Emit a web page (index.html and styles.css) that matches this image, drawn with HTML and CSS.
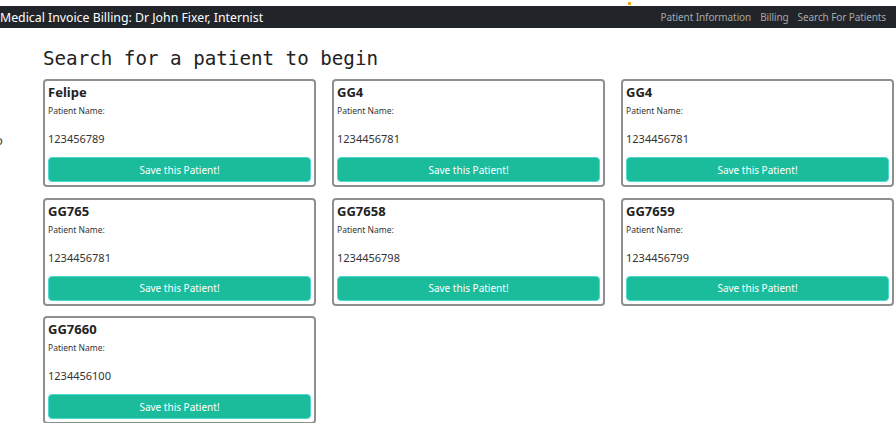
FILE: index.html
```html
<!DOCTYPE html>
<html>
<head>
<meta charset="utf-8">
<link rel="stylesheet" href="styles.css">
</head>
<body>
<div class="topstrip"><span class="dot"></span></div>
<nav class="navbar">
  <span class="brand">Medical Invoice Billing: Dr John Fixer, Internist</span>
  <div class="links">
    <a>Patient Information</a>
    <a>Billing</a>
    <a>Search For Patients</a>
  </div>
</nav>
<div class="main">
  <div class="gutter"><span class="stray">o</span></div>
  <div class="content">
    <h1 class="heading">Search for a patient to begin</h1>
    <div class="grid">
      <div class="card"><div class="title">Felipe</div><div class="label">Patient Name:</div><div class="num">123456789</div><div class="btn">Save this Patient!</div></div>
      <div class="card"><div class="title">GG4</div><div class="label">Patient Name:</div><div class="num">1234456781</div><div class="btn">Save this Patient!</div></div>
      <div class="card"><div class="title">GG4</div><div class="label">Patient Name:</div><div class="num">1234456781</div><div class="btn">Save this Patient!</div></div>
      <div class="card"><div class="title">GG765</div><div class="label">Patient Name:</div><div class="num">1234456781</div><div class="btn">Save this Patient!</div></div>
      <div class="card"><div class="title">GG7658</div><div class="label">Patient Name:</div><div class="num">1234456798</div><div class="btn">Save this Patient!</div></div>
      <div class="card"><div class="title">GG7659</div><div class="label">Patient Name:</div><div class="num">1234456799</div><div class="btn">Save this Patient!</div></div>
      <div class="card"><div class="title">GG7660</div><div class="label">Patient Name:</div><div class="num">1234456100</div><div class="btn">Save this Patient!</div></div>
    </div>
  </div>
</div>
</body>
</html>
```
FILE: styles.css
```css
html, body {
  margin: 0;
  padding: 0;
  background: #fff;
  font-family: "Noto Sans", "Open Sans", sans-serif;
  color: #212529;
  overflow: hidden;
}
.topstrip {
  height: 6px;
  display: flex;
}
.dot {
  width: 3px;
  height: 3px;
  margin-left: 628px;
  margin-top: 2px;
  background: #f5a30f;
}
.navbar {
  height: 22px;
  background: #212529;
  display: flex;
  align-items: center;
  justify-content: space-between;
  padding: 0 10px 0 0;
}
.brand {
  color: #fff;
  font-size: 12.3px;
}
.links {
  display: flex;
  gap: 9px;
}
.links a {
  color: #a4a7aa;
  font-size: 10px;
  letter-spacing: -0.1px;
}
.main {
  display: flex;
}
.gutter {
  width: 43px;
  flex: none;
  overflow: hidden;
}
.stray {
  display: block;
  margin-left: -5px;
  margin-top: 103px;
  font-size: 13px;
  color: #444;
}
.content {
  flex: none;
}
.heading {
  margin: 0;
  padding-top: 18px;
  height: 33px;
  font-family: "DejaVu Sans Mono", monospace;
  font-weight: normal;
  font-size: 19.2px;
  line-height: 26px;
  color: #222;
}
.grid {
  display: grid;
  grid-template-columns: repeat(3, 273px);
  column-gap: 16px;
  row-gap: 10.5px;
}
.card {
  box-sizing: border-box;
  height: 108px;
  border: 2px solid #8f8f8f;
  border-radius: 4px;
  padding: 2px 3px 3px;
  display: flex;
  flex-direction: column;
}
.title {
  font-size: 13px;
  font-weight: bold;
  line-height: 18px;
  color: #222;
}
.label {
  margin-top: 3px;
  font-size: 8.5px;
  line-height: 14px;
  color: #333;
}
.num {
  margin-top: 13px;
  font-size: 11px;
  line-height: 16px;
  color: #333;
}
.btn {
  margin-top: 10px;
  height: 25px;
  box-sizing: border-box;
  background: #1abc9c;
  border: 1px solid #4fd8d0;
  border-radius: 4px;
  color: #fff;
  font-size: 10px;
  display: flex;
  align-items: center;
  justify-content: center;
}
```
